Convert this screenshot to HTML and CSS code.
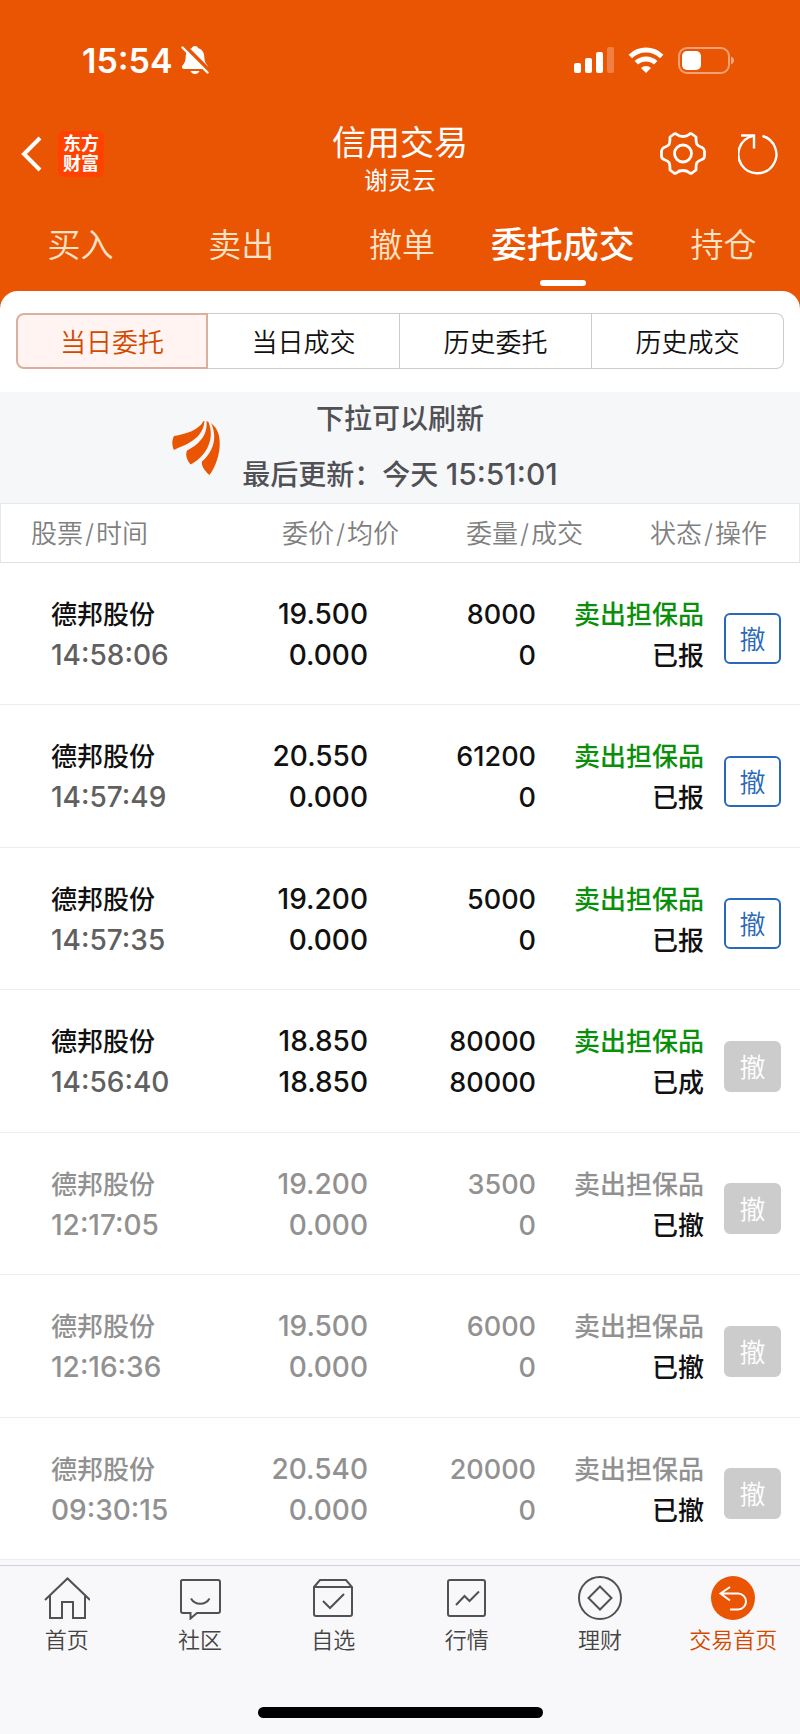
FILE: index.html
```html
<!DOCTYPE html>
<html lang="zh-CN">
<head>
    <meta charset="UTF-8">
    <meta name="viewport" content="width=device-width, initial-scale=1.0">
    <title>信用交易</title>
    <link rel="stylesheet" href="styles.css">
</head>
<body>

    <header class="header">
        <!-- 状态栏 -->
        <div class="status-bar">
            <span class="time">15:54</span>
            <svg class="bell" width="28" height="30" viewBox="0 0 28 30" fill="#fff">
                <path d="M14 1c-1.700 0-3 1-3.300 2.300C6.500 4.600 4.800 8 4.700 12c-.1 4-1 6-3 8.300C.3 22 .8 24 3 24h22c2.200 0 2.700-2 1.300-3.700-2-2.300-2.900-4.300-3-8.300-.1-4-1.800-7.400-6-8.700C17 2 15.700 1 14 1z"/>
                <path d="M9.500 26h9c-.8 2-2.500 3-4.500 3s-3.700-1-4.500-3z"/>
                <path d="M3 1l25 25" stroke="#ea5504" stroke-width="5"/>
                <path d="M1.500 2.500l25 25" stroke="#fff" stroke-width="2.400" stroke-linecap="round"/>
            </svg>
            <div class="status-icons">
                <svg width="40" height="26" viewBox="0 0 40 26" fill="#fff">
                    <rect x="0" y="16" width="7" height="10" rx="2"/>
                    <rect x="11" y="11" width="7" height="15" rx="2"/>
                    <rect x="22" y="5" width="7" height="21" rx="2"/>
                    <rect x="33" y="0" width="7" height="26" rx="2" opacity=".25"/>
                </svg>
                <svg width="36" height="26" viewBox="0 0 36 26" fill="none" stroke="#fff" stroke-width="5">
                    <path d="M2.300 9.500a22.500 22.500 0 0 1 31.400 0"/>
                    <path d="M8.300 15.800a14 14 0 0 1 19.400 0"/>
                    <path d="M18 26l-5-5a7.200 7.200 0 0 1 10 0z" fill="#fff" stroke="none"/>
                </svg>
                <svg width="57" height="27" viewBox="0 0 57 27">
                    <rect x="1" y="1" width="50" height="25" rx="8" fill="none" stroke="#fff" stroke-width="2" opacity=".45"/>
                    <rect x="4" y="4" width="19" height="19" rx="5" fill="#fff"/>
                    <path d="M53 9.500c4 1.500 4 6.500 0 8z" fill="#fff" opacity=".5"/>
                </svg>
            </div>
        </div>

        <div class="nav">
            <div class="nav-left">
                <button type="button" class="icon-btn" aria-label="返回">
                    <svg width="24" height="36" viewBox="0 0 24 36" fill="none" stroke="#fff" stroke-width="4">
                        <path d="M20 2L4 18l16 16"/>
                    </svg>
                </button>
                <a href="#" class="app-logo">东方<br>财富</a>
            </div>
            <div class="nav-title">
                <h1>信用交易</h1>
                <p>谢灵云</p>
            </div>
            <div class="nav-right">
                <button type="button" class="icon-btn" aria-label="设置">
                    <svg width="46" height="46" viewBox="0 0 46 46" fill="none" stroke="#fff" stroke-width="2.800" stroke-linejoin="round">
                        <path d="M23 5.500Q27 5.500 29 3.500Q30.500 2 32 3L36 6Q36 12 37 13.500Q38 15 42 16.500Q44.500 18 44.500 20V25Q44.500 27.500 42 28.500Q38 30 37 31.500Q36 33 36 39L32 42Q30.500 43 29 41.500Q27 39.500 23 39.500Q19 39.500 17 41.500Q15.500 43 14 42L10 39Q10 33 9 31.500Q8 30 4 28.500Q1.500 27.500 1.500 25V20Q1.500 18 4 16.500Q8 15 9 13.500Q10 12 10 6L14 3Q15.500 2 17 3.500Q19 5.500 23 5.500Z"/>
                        <circle cx="23" cy="22.500" r="8.500"/>
                    </svg>
                </button>
                <button type="button" class="icon-btn" aria-label="刷新">
                    <svg width="42" height="42" viewBox="0 0 42 42" fill="none" stroke="#fff" stroke-width="2.400">
                        <path d="M24.500 3a19 19 0 1 1-9.500-.2"/>
                        <path d="M3 2.500h13v13"/>
                    </svg>
                </button>
            </div>
        </div>

        <nav class="tabs">
            <a href="#">买入</a>
            <a href="#">卖出</a>
            <a href="#">撤单</a>
            <a href="#" class="active">委托成交</a>
            <a href="#">持仓</a>
        </nav>
    </header>

    <main class="sheet">
        <div class="segment">
            <button type="button" class="active">当日委托</button>
            <button type="button">当日成交</button>
            <button type="button">历史委托</button>
            <button type="button">历史成交</button>
        </div>

        <!-- 下拉刷新 -->
        <div class="refresh">
            <svg class="refresh-logo" width="48" height="54" viewBox="0 0 48 54" fill="#ea5504">
                <path d="M31.500 0C27 9 14 13 2 15C-.5 20 0 25 2 29C12 24 31 19 32.500 0z"/>
                <path d="M34.500 0C36 15 26 24 15 29.500C13 34 15 39 18.500 43.500C32 37 44 20 36.500 1z"/>
                <path d="M39 2C46 17 41 31 30 40.500C29 45 33 50 37.500 54C48 40 52 15 42 5z"/>
            </svg>
            <div class="refresh-text">
                <p>下拉可以刷新</p>
                <p>最后更新：今天 <span class="refresh-time">15:51:01</span></p>
            </div>
        </div>

        <table class="orders">
            <colgroup>
                <col class="col-name">
                <col class="col-price">
                <col class="col-qty">
                <col class="col-gap">
                <col class="col-status">
                <col class="col-action">
            </colgroup>
            <thead>
                <tr>
                    <th class="name">股票<span class="slash">/</span>时间</th>
                    <th>委价<span class="slash">/</span>均价</th>
                    <th colspan="2">委量<span class="slash">/</span>成交</th>
                    <th colspan="2" class="last">状态<span class="slash">/</span>操作</th>
                </tr>
            </thead>
            <tbody>
                <tr>
                    <td class="name">德邦股份<br><span class="at">14:58:06</span></td>
                    <td class="price">19.500<br>0.000</td>
                    <td class="qty">8000<br>0</td>
                    <td colspan="2"><span class="sell">卖出担保品</span><br><span class="state">已报</span></td>
                    <td class="action"><button type="button">撤</button></td>
                </tr>
                <tr>
                    <td class="name">德邦股份<br><span class="at">14:57:49</span></td>
                    <td class="price">20.550<br>0.000</td>
                    <td class="qty">61200<br>0</td>
                    <td colspan="2"><span class="sell">卖出担保品</span><br><span class="state">已报</span></td>
                    <td class="action"><button type="button">撤</button></td>
                </tr>
                <tr>
                    <td class="name">德邦股份<br><span class="at">14:57:35</span></td>
                    <td class="price">19.200<br>0.000</td>
                    <td class="qty">5000<br>0</td>
                    <td colspan="2"><span class="sell">卖出担保品</span><br><span class="state">已报</span></td>
                    <td class="action"><button type="button">撤</button></td>
                </tr>
                <tr>
                    <td class="name">德邦股份<br><span class="at">14:56:40</span></td>
                    <td class="price">18.850<br>18.850</td>
                    <td class="qty">80000<br>80000</td>
                    <td colspan="2"><span class="sell">卖出担保品</span><br><span class="state">已成</span></td>
                    <td class="action"><button type="button" disabled>撤</button></td>
                </tr>
                <tr class="cancelled">
                    <td class="name">德邦股份<br><span class="at">12:17:05</span></td>
                    <td class="price">19.200<br>0.000</td>
                    <td class="qty">3500<br>0</td>
                    <td colspan="2"><span class="sell">卖出担保品</span><br><span class="state">已撤</span></td>
                    <td class="action"><button type="button" disabled>撤</button></td>
                </tr>
                <tr class="cancelled">
                    <td class="name">德邦股份<br><span class="at">12:16:36</span></td>
                    <td class="price">19.500<br>0.000</td>
                    <td class="qty">6000<br>0</td>
                    <td colspan="2"><span class="sell">卖出担保品</span><br><span class="state">已撤</span></td>
                    <td class="action"><button type="button" disabled>撤</button></td>
                </tr>
                <tr class="cancelled">
                    <td class="name">德邦股份<br><span class="at">09:30:15</span></td>
                    <td class="price">20.540<br>0.000</td>
                    <td class="qty">20000<br>0</td>
                    <td colspan="2"><span class="sell">卖出担保品</span><br><span class="state">已撤</span></td>
                    <td class="action"><button type="button" disabled>撤</button></td>
                </tr>
            </tbody>
        </table>
    </main>

    <!-- 底部导航 -->
    <footer class="footer">
        <nav class="tabbar">
            <a href="#">
                <svg width="46" height="44" viewBox="0 0 46 44">
                    <path d="M1 24L23.500 2.500 46 24M6 20v22h12V26h11v16h12V20"/>
                </svg>
                首页
            </a>
            <a href="#">
                <svg width="46" height="44" viewBox="0 0 46 44">
                    <path d="M5 4h36a2 2 0 0 1 2 2v29a2 2 0 0 1-2 2H20l-6.500 5.500V37H6a2 2 0 0 1-2-2V5z"/>
                    <path d="M14 22.500c4 7 14.500 7 18.500 0"/>
                </svg>
                社区
            </a>
            <a href="#">
                <svg width="46" height="44" viewBox="0 0 46 44">
                    <path d="M4 11l6-7h26l6 7v27a2 2 0 0 1-2 2H6a2 2 0 0 1-2-2zM4 11h38M13 25l7 7 14-14"/>
                </svg>
                自选
            </a>
            <a href="#">
                <svg width="46" height="44" viewBox="0 0 46 44">
                    <rect x="4" y="4" width="37" height="36" rx="2"/>
                    <path d="M12 29l8.500-9 5 5L35 15.500"/>
                </svg>
                行情
            </a>
            <a href="#">
                <svg width="46" height="44" viewBox="0 0 46 44">
                    <circle cx="23" cy="22" r="21"/>
                    <path d="M23 10.500L34.500 22 23 33.500 11.500 22z"/>
                </svg>
                理财
            </a>
            <a href="#" class="active">
                <svg width="46" height="44" viewBox="0 0 46 44">
                    <circle class="disc" cx="23" cy="22" r="22"/>
                    <path d="M20 11L10.500 17.500 20 24.500M11 17.500h17a8 8 0 0 1 0 16h-8"/>
                </svg>
                交易首页
            </a>
        </nav>
        <div class="home-indicator"></div>
    </footer>

</body>
</html>
```

FILE: styles.css
```css
* {
    box-sizing: border-box;
}
body {
    margin: 0;
    min-height: 100vh;
    display: flex;
    flex-direction: column;
    background-color: #f8f8fa;
    font-family: Inter, "Noto Sans CJK SC", sans-serif;
    font-size: 26px;
    color: #111;
}
h1, p {
    margin: 0;
    font-weight: 400;
}
a {
    text-decoration: none;
}
button {
    font-family: inherit;
    cursor: pointer;
}
svg {
    display: block;
}

/* 顶部 */
.header {
    overflow: hidden;
    padding-top: 40px;
    padding-bottom: 18px;
    background-color: #ea5504;
    color: #fff;
}
.status-bar {
    display: flex;
    align-items: center;
    height: 40px;
    padding: 0 65px 0 82px;
}
.time {
    font-size: 34px;
    font-weight: 600;
}
.bell {
    margin-left: 8px;
}
.status-icons {
    display: flex;
    gap: 14px;
    margin-left: auto;
}
.nav {
    display: grid;
    grid-template-columns: 1fr auto 1fr;
    align-items: center;
    min-height: 88px;
    margin-top: 30px;
    padding: 0 20px;
}
.nav-left {
    display: flex;
    align-items: center;
    gap: 14px;
}
.nav-right {
    display: flex;
    align-items: center;
    justify-content: flex-end;
    gap: 32px;
}
.icon-btn {
    padding: 0;
    border: 0;
    background: none;
}
.app-logo {
    width: 46px;
    height: 46px;
    padding-top: 3px;
    border-radius: 6px;
    background-color: #ff4200;
    font-size: 18px;
    font-weight: 700;
    line-height: 20px;
    text-align: center;
    color: #fff;
}
.nav-title {
    align-self: end;
    text-align: center;
}
.nav-title h1 {
    font-size: 34px;
    line-height: 42px;
}
.nav-title p {
    font-size: 24px;
    line-height: 34px;
}
.tabs {
    display: grid;
    grid-template-columns: repeat(5, 1fr);
    margin-right: -4px;
    padding-top: 22px;
}
.tabs a {
    position: relative;
    padding-bottom: 21px;
    font-size: 33px;
    font-weight: 350;
    line-height: 50px;
    text-align: center;
    color: #fde3c8;
}
.tabs .active {
    font-size: 36px;
    font-weight: 500;
    color: #fff;
}
.tabs .active::after {
    content: "";
    position: absolute;
    bottom: 5px;
    left: 50%;
    width: 46px;
    height: 6px;
    margin-left: -23px;
    border-radius: 3px;
    background-color: #fff;
}

/* 内容 */
.sheet {
    margin-top: -18px;
    padding-top: 22px;
    border-radius: 18px 18px 0 0;
    background-color: #fff;
}
.segment {
    display: grid;
    grid-template-columns: repeat(4, 1fr);
    margin: 0 16px 23px;
}
.segment button {
    height: 56px;
    padding: 0 0 2px;
    border: 1px solid #ccc;
    border-left-width: 0;
    background-color: #fff;
    font-size: 26px;
    font-weight: 350;
    color: #111;
}
.segment button:last-child {
    border-radius: 0 8px 8px 0;
}
.segment .active {
    border: 2px solid #dbaf9e;
    border-radius: 8px 0 0 8px;
    background-color: #fff4f1;
    color: #d24a00;
}
.refresh {
    display: grid;
    grid-template-columns: 1fr auto 1fr;
    align-items: center;
    background-color: #f6f7f9;
}
.refresh-logo {
    justify-self: end;
    margin-right: 22px;
}
.refresh-text {
    font-size: 28px;
    line-height: 55px;
    text-align: center;
    color: #505055;
}
.refresh-text p {
    font-weight: 500;
}
.refresh-time {
    font-size: 30px;
}

/* 委托列表 */
.orders {
    width: 100%;
    border-collapse: separate;
    border-spacing: 0;
    table-layout: fixed;
    font-weight: 500;
    line-height: 41px;
    text-align: right;
}
.col-name {
    width: 27%;
}
.col-price {
    width: 23%;
}
.col-qty {
    width: 19%;
}
.col-gap {
    width: 4%;
}
.col-status {
    width: 15%;
}
.col-action {
    width: 12%;
}
.orders th {
    height: 60px;
    padding: 0 1px 0 0;
    border-top: 1px solid #e8e8ea;
    border-bottom: 1px solid #e2e2e4;
    font-weight: 350;
    color: #808080;
}
.orders th.name {
    padding-left: 30px;
    border-left: 1px solid #e8e8ea;
}
.orders th.last {
    padding-right: 32px;
    border-right: 1px solid #e8e8ea;
}
.slash {
    margin: 0 2px;
}
.orders td {
    height: 142px;
    padding: 2px 0 0;
    border-bottom: 1px solid #ececee;
}
.orders tr:nth-child(even) td {
    height: 143px;
}
.orders .name {
    text-align: left;
}
.orders td.name {
    padding-left: 51px;
}
.orders .at {
    font-size: 28px;
    color: #606060;
}
.orders td.price {
    padding-right: 32px;
    font-size: 28px;
}
.orders td.qty {
    padding-right: 16px;
    font-size: 27px;
}
.sell {
    color: #0a8f0a;
}
.state {
    color: #111;
}
.orders td.action {
    padding: 10px 0 0 20px;
    text-align: left;
}
.action button {
    display: block;
    width: 57px;
    height: 51px;
    padding: 0 0 2px;
    border: 2px solid #2a68b8;
    border-radius: 6px;
    background-color: #fff;
    font-size: 26px;
    font-weight: 350;
    color: #2a68b8;
}
.action button:disabled {
    border-color: #ccc;
    background-color: #ccc;
    color: #fff;
}
.cancelled,
.cancelled .at,
.cancelled .sell {
    color: #919191;
}

/* 底部 */
.footer {
    padding-top: 5px;
}
.tabbar {
    display: grid;
    grid-template-columns: repeat(6, 1fr);
    padding-top: 10px;
    border-top: 1px solid #d2d2d6;
}
.tabbar a {
    display: flex;
    flex-direction: column;
    align-items: center;
    gap: 4px;
    font-size: 22px;
    font-weight: 350;
    line-height: 32px;
    color: #444;
}
.tabbar svg {
    fill: none;
    stroke: #505055;
    stroke-width: 2;
}
.tabbar .active {
    color: #d24a00;
}
.tabbar .active svg {
    stroke: #fff;
}
.tabbar .disc {
    fill: #ea5504;
    stroke: none;
}
.home-indicator {
    width: 285px;
    height: 11px;
    margin: 51px auto 16px;
    border-radius: 6px;
    background-color: #000;
}
```
